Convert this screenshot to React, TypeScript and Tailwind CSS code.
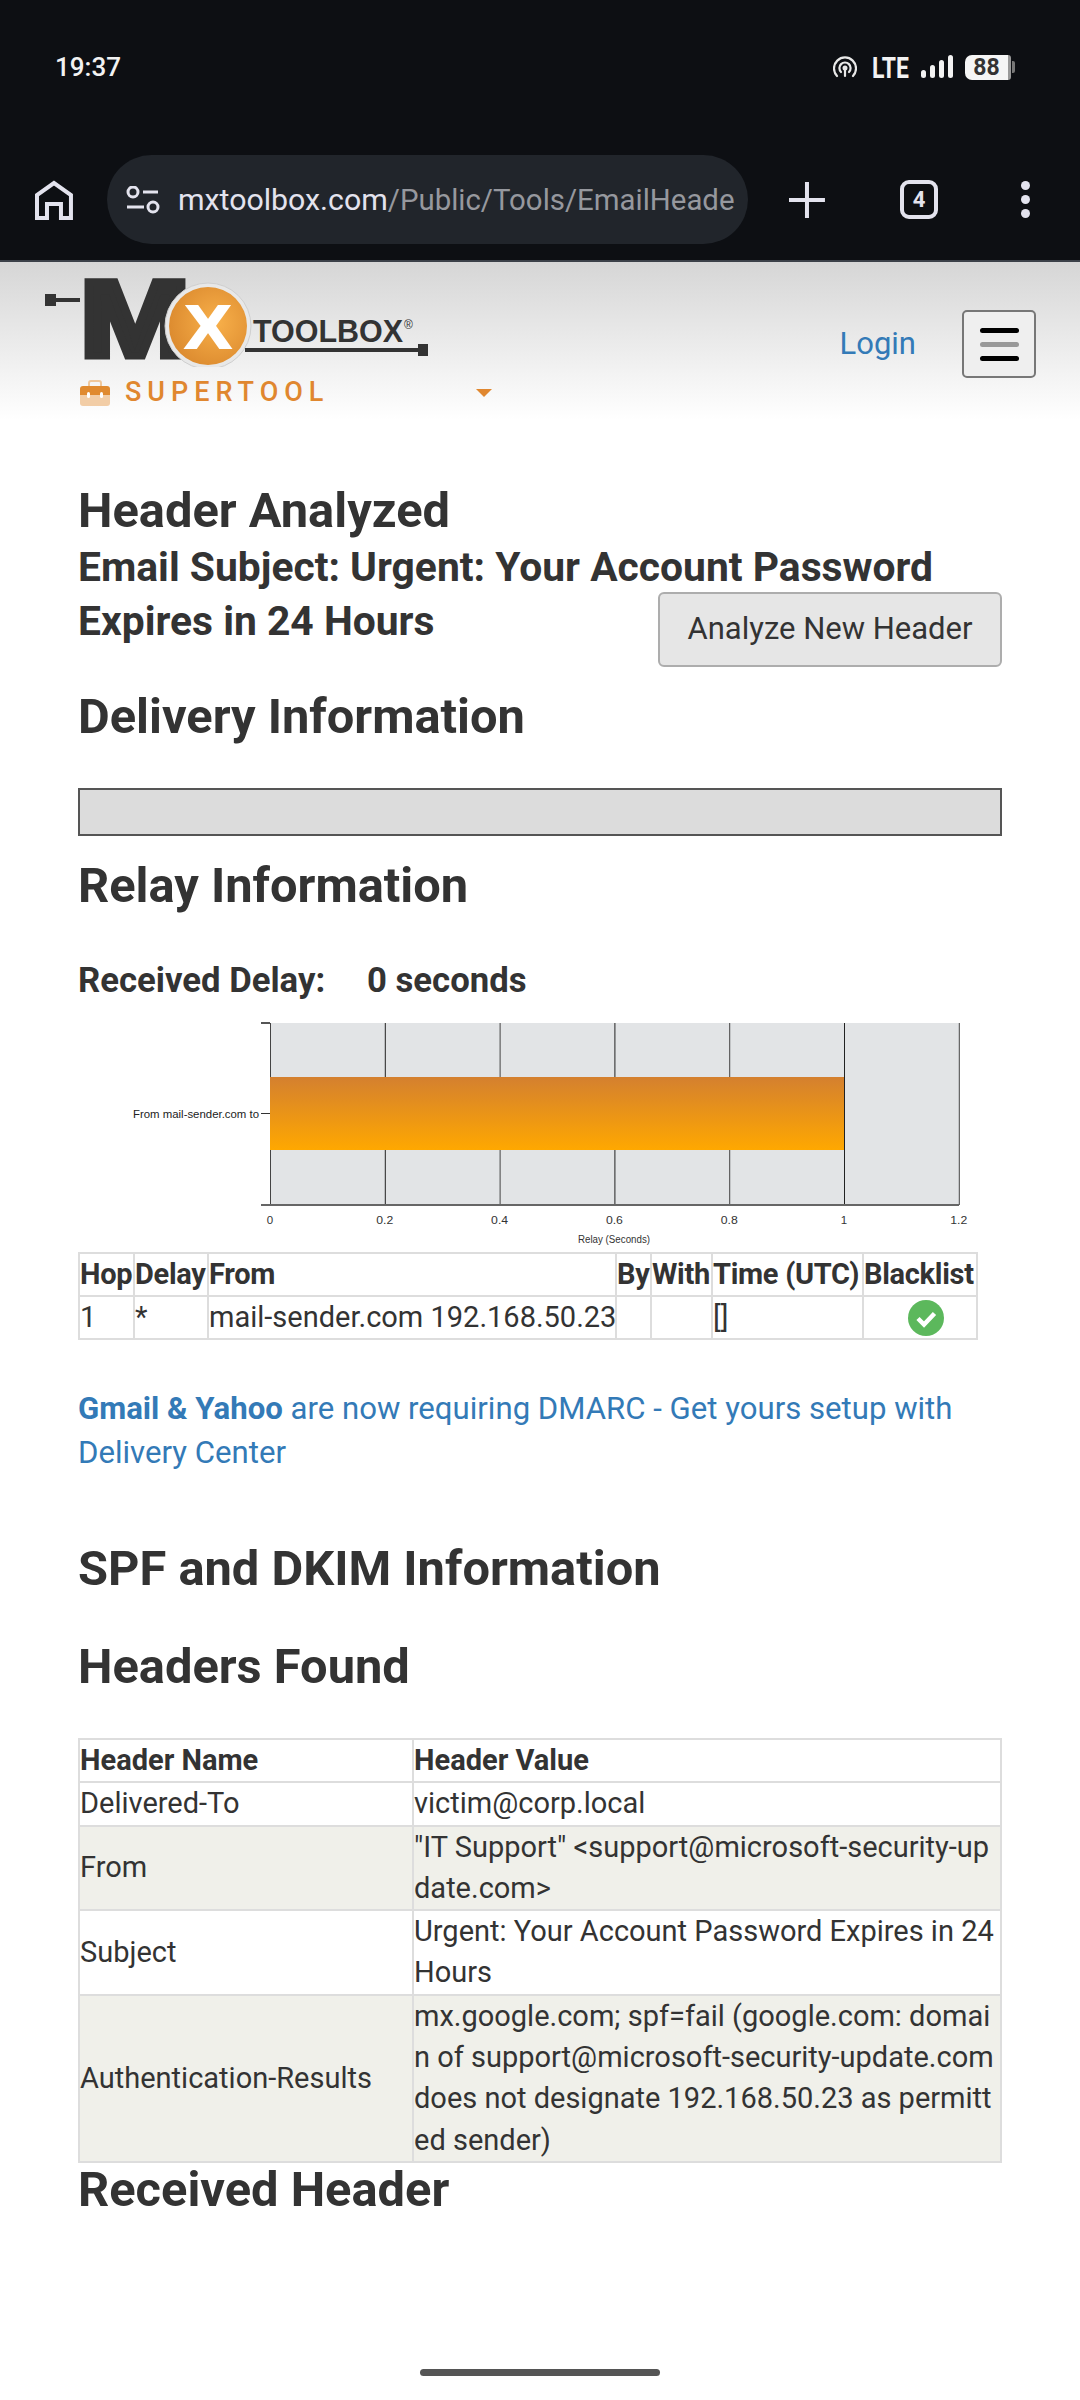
const font = "font-['Roboto',sans-serif]";

const relayHops = [
  { hop: "1", delay: "*", from: "mail-sender.com 192.168.50.23", by: "", withCol: "", time: "[]" },
];

const foundHeaders = [
  { name: "Delivered-To", value: "victim@corp.local" },
  { name: "From", value: "\"IT Support\" <support@microsoft-security-update.com>" },
  { name: "Subject", value: "Urgent: Your Account Password Expires in 24 Hours" },
  {
    name: "Authentication-Results",
    value:
      "mx.google.com; spf=fail (google.com: domain of support@microsoft-security-update.com does not designate 192.168.50.23 as permitted sender)",
  },
];

const StatusIcons = () => (
  <div className="flex items-center">
    <svg width="24" height="22" viewBox="0 0 24 22" fill="none" stroke="#e8e8e8" strokeWidth="2.2" strokeLinecap="round">
      <path d="M4 20a11 11 0 1 1 16 0" />
      <path d="M8 16a5.6 5.6 0 1 1 8 0" />
      <circle cx="12" cy="12" r="1.4" fill="#e8e8e8" />
      <path d="M12 13v7" />
    </svg>
    <svg className="ml-[15px]" width="38" height="34" viewBox="0 -4 38 34">
      <text x="0" y="23.5" fontFamily="Roboto" fontWeight="700" fontSize="29" fill="#f2f2f2" textLength="37" lengthAdjust="spacingAndGlyphs">LTE</text>
    </svg>
    <svg className="ml-[11px]" width="33" height="24" viewBox="0 0 33 24" fill="#f2f2f2">
      <rect x="0" y="15" width="5" height="8" rx="2.5" />
      <rect x="9" y="10" width="5" height="13" rx="2.5" />
      <rect x="18" y="5" width="5" height="18" rx="2.5" />
      <rect x="27" y="0" width="5" height="23" rx="2.5" />
    </svg>
    <div className="ml-[11px] flex h-[25px] w-[43px] items-center justify-center rounded-l-[7px] bg-[#f5f5f5] text-[23px] leading-none font-bold text-[#333]">
      88
    </div>
    <div className="h-[25px] w-[3px] rounded-r-[3px] bg-[#999]" />
    <div className="ml-[1px] h-[12px] w-[3px] rounded-r-[2px] bg-[#777]" />
  </div>
);

const BrowserBar = () => (
  <div className="flex items-center pl-[35px] pr-[50px]">
    <svg width="38" height="40" viewBox="0 0 38 40" fill="none" stroke="#e3e3ee" strokeWidth="4">
      <path d="M2 38V15L19 3l17 12v23H26V24H12v14z" strokeLinejoin="miter" />
    </svg>
    <div className="ml-[34px] flex h-[89px] w-[642px] items-center overflow-hidden rounded-full bg-[#21252b] pl-[19px]">
      <svg className="shrink-0" width="34" height="28" viewBox="0 0 34 28" fill="none" stroke="#e3e3ee" strokeWidth="3">
        <circle cx="7" cy="6" r="5" />
        <path d="M17 6h15" />
        <path d="M1 21h17" />
        <circle cx="27" cy="21" r="5" />
      </svg>
      <div className="ml-[18px] whitespace-nowrap text-[30.3px]">
        <span className="text-[#e3e3ee]">mxtoolbox.com</span>
        <span className="text-[29.4px] text-[#96989e]">/Public/Tools/EmailHeade</span>
      </div>
    </div>
    <svg className="ml-[41px]" width="36" height="36" viewBox="0 0 36 36" stroke="#e3e3ee" strokeWidth="4">
      <path d="M18 0v36M0 18h36" />
    </svg>
    <div className="ml-[75px] flex h-[39px] w-[38px] items-center justify-center rounded-[9px] border-[4px] border-[#e3e3ee] text-[22px] font-bold leading-none text-[#e3e3ee]">
      4
    </div>
    <div className="ml-[83px] flex flex-col gap-[5px]">
      <div className="h-[9px] w-[9px] rounded-full bg-[#e3e3ee]" />
      <div className="h-[9px] w-[9px] rounded-full bg-[#e3e3ee]" />
      <div className="h-[9px] w-[9px] rounded-full bg-[#e3e3ee]" />
    </div>
  </div>
);

const Logo = () => (
  <svg className="block" width="400" height="110" viewBox="0 -10 400 110">
    <rect x="0" y="27" width="11" height="12" fill="#333" />
    <rect x="10" y="31" width="25" height="4" fill="#333" />
    <text x="35" y="89" fontFamily="Liberation Sans" fontWeight="700" fontSize="108" fill="#333" stroke="#333" strokeWidth="7" textLength="110" lengthAdjust="spacingAndGlyphs">M</text>
    <circle cx="163" cy="59" r="43" fill="#e8e8e8" stroke="#cfcfcf" strokeWidth="1" />
    <defs>
      <radialGradient id="orb" cx="0.6" cy="0.45" r="0.6">
        <stop offset="0" stopColor="#f8b04a" />
        <stop offset="1" stopColor="#dd8c30" />
      </radialGradient>
    </defs>
    <circle cx="163" cy="59" r="39" fill="url(#orb)" />
    <text x="163" y="81" textAnchor="middle" fontFamily="Liberation Sans" fontWeight="700" fontSize="62" fill="#fff" stroke="#fff" strokeWidth="2" textLength="46" lengthAdjust="spacingAndGlyphs">X</text>
    <text x="208" y="75" fontFamily="Liberation Sans" fontWeight="700" fontSize="31" fill="#333" textLength="150" lengthAdjust="spacingAndGlyphs">TOOLBOX</text>
    <text x="359" y="62" fontFamily="Liberation Sans" fontSize="12" fill="#333">®</text>
    <rect x="200" y="81" width="174" height="4" fill="#333" />
    <rect x="373" y="77" width="10" height="12" fill="#333" />
  </svg>
);

const SiteHeader = () => (
  <div className="flex h-[158px] justify-between bg-gradient-to-b from-[#d6d6d6] to-white pl-[45px] pr-[44px]">
    <div className="flex flex-col">
      <div className="-mt-[5px]">
        <Logo />
      </div>
      <div className="ml-[35px] mt-[12px] flex items-center">
        <svg width="30" height="26" viewBox="0 0 30 26">
          <path d="M9 6V3a2 2 0 0 1 2-2h8a2 2 0 0 1 2 2v3" fill="none" stroke="#efc79b" strokeWidth="2" />
          <path d="M0 9a3 3 0 0 1 3-3h24a3 3 0 0 1 3 3v6H0z" fill="#e08a2f" />
          <path d="M0 15h30v8a3 3 0 0 1-3 3H3a3 3 0 0 1-3-3z" fill="#f2cda6" />
          <rect x="7" y="12" width="3" height="6" rx="1.5" fill="#fff" />
          <rect x="20" y="12" width="3" height="6" rx="1.5" fill="#fff" />
        </svg>
        <span className="ml-[15px] w-[351px] text-[27px] leading-none font-medium tracking-[6px] text-[#e0872f]">SUPERTOOL</span>
        <div className="h-0 w-0 border-x-[8px] border-t-[8px] border-x-transparent border-t-[#e0872f]" />
      </div>
    </div>
    <div className="mt-[48px] flex h-[68px] items-center">
      <span className="text-[31px] text-[#337ab7]">Login</span>
      <div className="ml-[46px] flex h-[68px] w-[74px] flex-col items-center justify-center gap-[9px] rounded-[5px] border-2 border-[#777] bg-[#efefef]">
        <div className="h-[5px] w-[39px] rounded-full bg-black" />
        <div className="h-[5px] w-[39px] rounded-full bg-[#999]" />
        <div className="h-[5px] w-[39px] rounded-full bg-black" />
      </div>
    </div>
  </div>
);

const RelayChart = () => {
  const ticks = [0, 0.2, 0.4, 0.6, 0.8, 1, 1.2];
  return (
    <svg className="mt-[8px] block" width="924" height="239" viewBox="0 0 924 239">
      <defs>
        <linearGradient id="bar" x1="0" y1="0" x2="0" y2="1">
          <stop offset="0" stopColor="#d4802f" />
          <stop offset="1" stopColor="#ffa800" />
        </linearGradient>
      </defs>
      <rect x="192" y="15" width="689" height="182" fill="#e2e4e6" />
      {ticks.map((t, i) => (
        <g key={t}>
          <rect x={192 + i * 114.8} y="15" width="1" height="182" fill={i % 2 === 0 ? "#444" : "#222"} />
          <text x={192 + i * 114.8} y="216" textAnchor="middle" fontFamily="Liberation Sans" fontSize="11.5" fill="#333" textLength={t === 0 || t === 1 ? undefined : 17} lengthAdjust="spacingAndGlyphs">{t}</text>
        </g>
      ))}
      <rect x="183" y="14" width="9" height="2" fill="#555" />
      <rect x="183" y="105" width="9" height="1" fill="#333" />
      <rect x="183" y="196" width="698" height="2" fill="#666" />
      <rect x="192" y="69" width="574" height="73" fill="url(#bar)" />
      <text x="181" y="110" textAnchor="end" fontFamily="Liberation Sans" fontSize="11.5" fill="#222" textLength="126" lengthAdjust="spacingAndGlyphs">From mail-sender.com to</text>
      <text x="536" y="235" textAnchor="middle" fontFamily="Liberation Sans" fontSize="10" fill="#333" textLength="72" lengthAdjust="spacingAndGlyphs">Relay (Seconds)</text>
    </svg>
  );
};

const cell = "border-2 border-[#ddd] px-0 py-0 text-left";

const RelayTable = () => (
  <table className="mt-[5px] w-[898px] table-fixed border-collapse text-[29px] leading-[41px] text-[#333]">
    <colgroup>
      <col className="w-[55px]" />
      <col className="w-[74px]" />
      <col className="w-[408px]" />
      <col className="w-[35px]" />
      <col className="w-[61px]" />
      <col className="w-[151px]" />
      <col className="w-[114px]" />
    </colgroup>
    <thead>
      <tr className="font-bold">
        {["Hop", "Delay", "From", "By", "With", "Time (UTC)", "Blacklist"].map((h) => (
          <th key={h} className={cell + " whitespace-nowrap font-bold tracking-[-0.3px]"}>{h}</th>
        ))}
      </tr>
    </thead>
    <tbody>
      {relayHops.map((row) => (
        <tr key={row.hop}>
          <td className={cell}>{row.hop}</td>
          <td className={cell}>{row.delay}</td>
          <td className={cell + " whitespace-nowrap"}>{row.from}</td>
          <td className={cell}>{row.by}</td>
          <td className={cell}>{row.withCol}</td>
          <td className={cell}>{row.time}</td>
          <td className={cell}>
            <svg className="ml-[44px] block" width="36" height="36" viewBox="0 0 36 36">
              <circle cx="18" cy="18" r="18" fill="#5cb85c" />
              <path d="M10 18.5l6 6 10.5-11" fill="none" stroke="#fff" strokeWidth="4.5" />
            </svg>
          </td>
        </tr>
      ))}
    </tbody>
  </table>
);

const HeadersTable = () => (
  <table className="mt-[45px] w-[924px] table-fixed border-collapse text-[29px] leading-[41.3px] text-[#333]">
    <colgroup>
      <col className="w-[334px]" />
      <col />
    </colgroup>
    <thead>
      <tr>
        <th className={cell + " font-bold"}>Header Name</th>
        <th className={cell + " font-bold"}>Header Value</th>
      </tr>
    </thead>
    <tbody>
      {foundHeaders.map((row, i) => (
        <tr key={row.name} className={i % 2 === 1 ? "bg-[#f0f0ea]" : "bg-white"}>
          <td className={cell}>{row.name}</td>
          <td className={cell + " break-all"}>{row.value}</td>
        </tr>
      ))}
    </tbody>
  </table>
);

const h2 = "text-[48.8px] leading-[52px] font-bold text-[#333]";
const h3 = "text-[40.8px] leading-[54px] font-bold text-[#333]";

export default function App() {
  return (
    <div className={"flex h-[2400px] w-[1080px] flex-col overflow-hidden bg-white " + font}>
      <div className="h-[262px] bg-[#0d0f13] border-b-[2px] border-[#3c4149]">
        <div className="flex items-center justify-between pl-[55px] pr-[65px] pt-[50px]">
          <span className="text-[26px] leading-[26px] font-medium text-[#f2f2f2]">19:37</span>
          <StatusIcons />
        </div>
        <div className="mt-[71px]">
          <BrowserBar />
        </div>
      </div>

      <SiteHeader />

      <div className="px-[78px]">
        <h1 className={h2 + " mt-[65px]"}>Header Analyzed</h1>
        <h3 className={h3 + " mt-[3px]"}>Email Subject: Urgent: Your Account Password</h3>
        <div className="flex items-start justify-between">
          <h3 className={h3}>Expires in 24 Hours</h3>
          <button className="-mt-[2px] h-[75px] w-[344px] rounded-[6px] border-2 border-[#adadad] bg-[#e6e6e6] text-[31px] text-[#333]">
            Analyze New Header
          </button>
        </div>
        <h2 className={h2 + " mt-[24px]"}>Delivery Information</h2>
        <div className="mt-[45px] h-[48px] border-2 border-[#555] bg-[#dcdcdc]" />
        <h2 className={h2 + " mt-[24px]"}>Relay Information</h2>
        <div className="mt-[48px] flex text-[34.7px] leading-[40px] font-bold text-[#333]">
          <span className="w-[289px]">Received Delay:</span>
          <span>0 seconds</span>
        </div>
        <RelayChart />
        <RelayTable />
        <p className="mt-[47px] text-[31.15px] leading-[44px] text-[#337ab7]">
          <b>Gmail &amp; Yahoo</b> are now requiring DMARC - Get yours setup with Delivery Center
        </p>
        <h2 className={h2 + " mt-[68px]"}>SPF and DKIM Information</h2>
        <h2 className={h2 + " mt-[46px]"}>Headers Found</h2>
        <HeadersTable />
        <h2 className={h2 + " mt-[1px]"}>Received Header</h2>
      </div>

      <div className="mt-auto mb-[24px] mx-auto h-[7px] w-[240px] rounded-full bg-[#555]" />
    </div>
  );
}
